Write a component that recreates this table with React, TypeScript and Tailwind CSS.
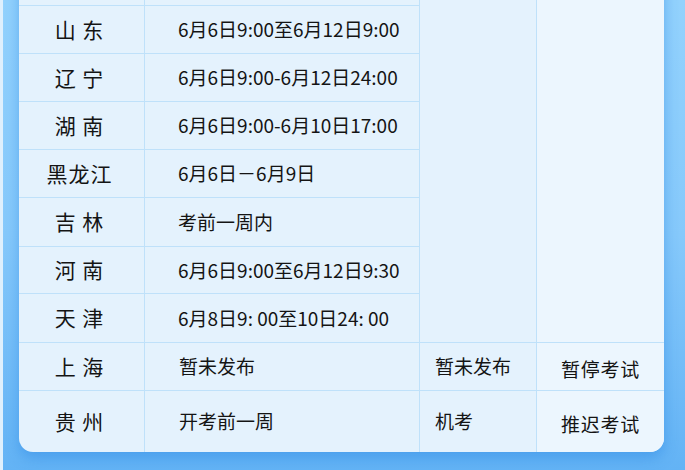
const rows = [
  { name: "", time: "" },
  { name: "山 东", time: "6月6日9:00至6月12日9:00" },
  { name: "辽 宁", time: "6月6日9:00-6月12日24:00" },
  { name: "湖 南", time: "6月6日9:00-6月10日17:00" },
  { name: "黑龙江", time: "6月6日－6月9日" },
  { name: "吉 林", time: "考前一周内" },
  { name: "河 南", time: "6月6日9:00至6月12日9:30" },
  { name: "天 津", time: "6月8日9: 00至10日24: 00" },
]

const tail = [
  { name: "上 海", time: "暂未发布", mode: "暂未发布", status: "暂停考试" },
  { name: "贵 州", time: "开考前一周", mode: "机考", status: "推迟考试" },
]

const cell = "border-[#bfe1fa] flex items-center"

export default function App() {
  return (
    <div
      className="w-[685px] h-[470px] overflow-hidden bg-[#dff0fd] pl-[3px]"
      style={{ fontFamily: '"Noto Sans CJK SC", "Noto Sans", sans-serif' }}
    >
      <div className="h-full flex flex-col bg-gradient-to-b from-[#93d2fd] via-[#86c9fb] to-[#63b3f5] pl-[16px] pr-[21px]">
        <div className="-mt-[42px] rounded-b-[14px] overflow-hidden bg-[#e4f2fd] shadow-[0_6px_14px_rgba(40,130,225,0.45)] text-[#141414]">
          <div className="grid grid-cols-[126px_275px_117px_1fr] grid-rows-[48px_48px_48px_48px_48px_49px_47px_49px_48px_61px]">
            {rows.map((r, i) => (
              <div key={i} className="contents">
                <div
                  className={`${cell} border-r border-b justify-center text-[21px] tracking-[1px] pr-[4px]`}
                  style={{ gridRow: i + 1, gridColumn: 1 }}
                >
                  {r.name}
                </div>
                <div
                  className={`${cell} border-r border-b pl-[33px] text-[19px]`}
                  style={{ gridRow: i + 1, gridColumn: 2 }}
                >
                  {r.time}
                </div>
              </div>
            ))}
            <div className={`${cell} border-r border-b row-start-1 row-end-9 col-start-3`} />
            <div className={`${cell} border-b row-start-1 row-end-9 col-start-4 bg-[#ecf6fe]`} />
            {tail.map((r, i) => (
              <div key={r.name} className="contents">
                <div
                  className={`${cell} border-r ${i === 0 ? "border-b" : ""} justify-center text-[21px] tracking-[1px] pr-[4px]`}
                  style={{ gridRow: i + 9, gridColumn: 1 }}
                >
                  {r.name}
                </div>
                <div
                  className={`${cell} border-r ${i === 0 ? "border-b" : ""} pl-[34px] text-[19px]`}
                  style={{ gridRow: i + 9, gridColumn: 2 }}
                >
                  {r.time}
                </div>
                <div
                  className={`${cell} border-r ${i === 0 ? "border-b" : ""} pl-[15px] text-[19px]`}
                  style={{ gridRow: i + 9, gridColumn: 3 }}
                >
                  {r.mode}
                </div>
                <div
                  className={`${cell} ${i === 0 ? "border-b" : ""} justify-center pt-[6px] text-[19px] tracking-[0.7px] bg-[#ecf6fe]`}
                  style={{ gridRow: i + 9, gridColumn: 4 }}
                >
                  {r.status}
                </div>
              </div>
            ))}
          </div>
        </div>
      </div>
    </div>
  )
}
